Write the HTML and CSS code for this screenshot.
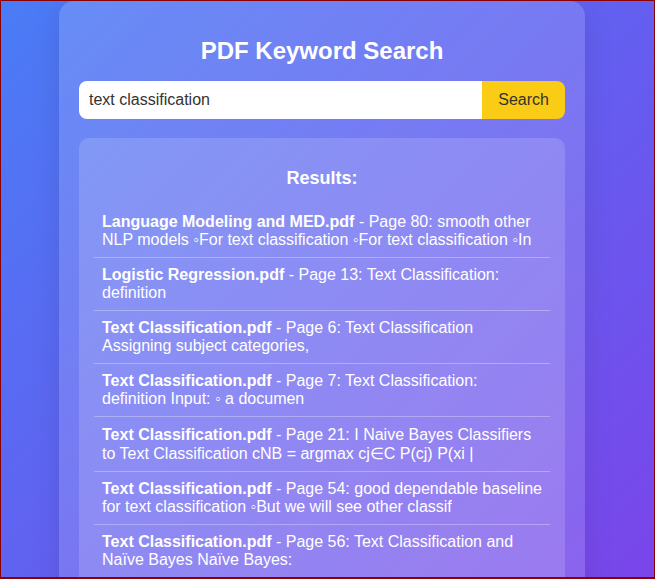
FILE: index.html
```html
<!DOCTYPE html>
<html lang="en">
<head>
<meta charset="utf-8">
<title>PDF Keyword Search</title>
<link rel="stylesheet" href="styles.css">
</head>
<body>
<div class="frame"></div>
<main class="container">
  <h1 class="title">PDF Keyword Search</h1>
  <form class="search">
    <input class="search-input" type="text" value="text classification">
    <button class="search-btn" type="button">Search</button>
  </form>
  <section class="results">
    <h3 class="results-title">Results:</h3>
    <ul class="result-list">
      <li class="result"><strong>Language Modeling and MED.pdf</strong> - Page 80: smooth other NLP models ◦For text classification ◦For text classification ◦In</li>
      <li class="result"><strong>Logistic Regression.pdf</strong> - Page 13: Text Classification: definition</li>
      <li class="result"><strong>Text Classification.pdf</strong> - Page 6: Text Classification Assigning subject categories,</li>
      <li class="result"><strong>Text Classification.pdf</strong> - Page 7: Text Classification: definition Input: ◦ a documen</li>
      <li class="result result-tall"><strong>Text Classification.pdf</strong> - Page 21: I Naive Bayes Classifiers to Text Classification cNB = argmax cj∈C P(cj) P(xi |</li>
      <li class="result"><strong>Text Classification.pdf</strong> - Page 54: good dependable baseline for text classification ◦But we will see other classif</li>
      <li class="result"><strong>Text Classification.pdf</strong> - Page 56: Text Classification and Naïve Bayes Naïve Bayes:</li>
    </ul>
  </section>
</main>
</body>
</html>
```
FILE: styles.css
```css
html {
  height: 100%;
  background: linear-gradient(135deg, #4a7cf6 0%, #7a45ea 100%) fixed;
}

body {
  margin: 0;
  padding: 1px 11px 0 0;
  display: flex;
  justify-content: center;
  font-family: "Liberation Sans", Arial, sans-serif;
  color: #fff;
  overflow: hidden;
  height: 100%;
  box-sizing: border-box;
}

.frame {
  position: fixed;
  inset: 0;
  border: 1px solid #8b0000;
  border-bottom-width: 2px;
  pointer-events: none;
  z-index: 10;
}

.container {
  width: 486px;
  padding: 20px;
  background: rgba(255, 255, 255, 0.15);
  border-radius: 15px;
  box-shadow: 0 4px 30px rgba(0, 0, 0, 0.1);
  align-self: flex-start;
}

.title {
  font-size: 24px;
  font-weight: bold;
  text-align: center;
  margin: 16px 0;
}

.search {
  display: flex;
  margin: 0;
}

.search-input {
  flex: 1;
  min-width: 0;
  border: none;
  outline: none;
  padding: 10px;
  font-family: inherit;
  font-size: 16px;
  color: #333;
  background: #fff;
  border-radius: 8px 0 0 8px;
}

.search-btn {
  border: none;
  padding: 10px 16px;
  font-family: inherit;
  font-size: 16px;
  color: #333;
  background: #facc15;
  border-radius: 0 8px 8px 0;
}

.results {
  margin-top: 19px;
  padding: 15px;
  background: rgba(255, 255, 255, 0.15);
  border-radius: 10px;
}

.results-title {
  font-size: 18px;
  font-weight: bold;
  text-align: center;
  margin: 15px 0 16px;
}

.result-list {
  list-style: none;
  margin: 0;
  padding: 0;
}

.result {
  padding: 8px;
  font-size: 16px;
  border-bottom: 1px solid rgba(255, 255, 255, 0.3);
}

.result-tall {
  padding-top: 9px;
}
```
